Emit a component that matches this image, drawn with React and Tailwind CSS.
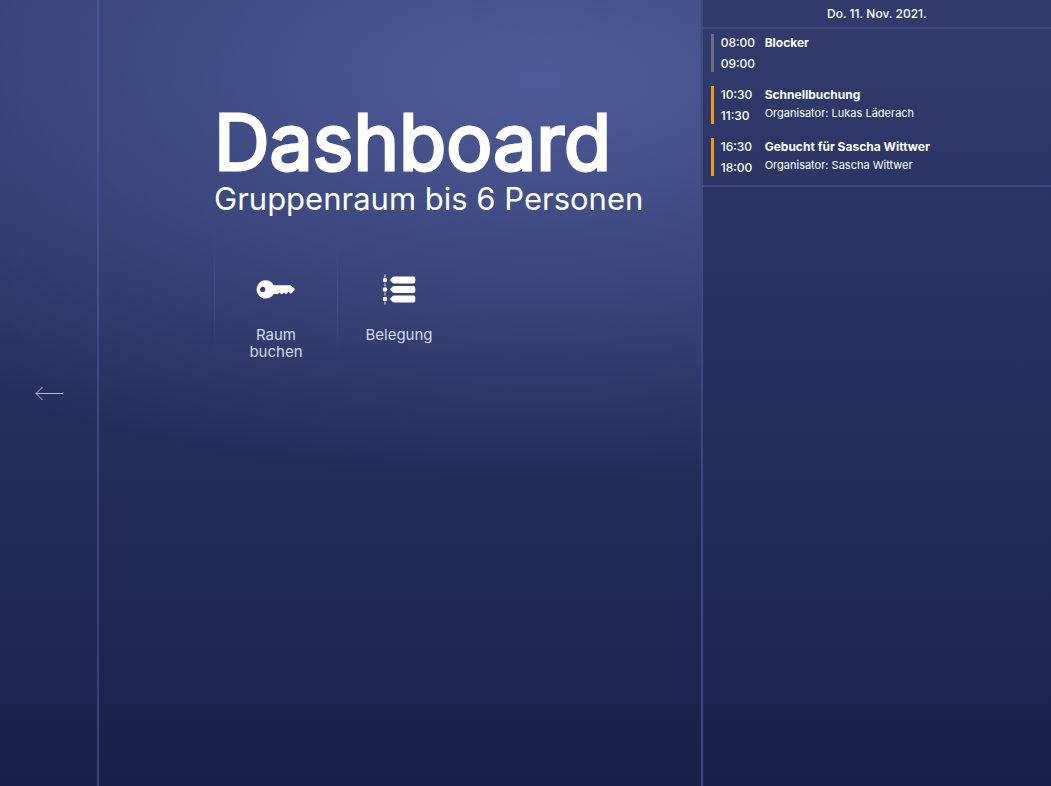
import React from "react";

const bookings = [
  { start: "08:00", end: "09:00", title: "Blocker", organizer: null, bar: "bg-[#6b7080]" },
  { start: "10:30", end: "11:30", title: "Schnellbuchung", organizer: "Lukas Läderach", bar: "bg-[#ee9a12]" },
  { start: "16:30", end: "18:00", title: "Gebucht für Sascha Wittwer", organizer: "Sascha Wittwer", bar: "bg-[#ee9a12]" },
];

function KeyIcon() {
  return (
    <svg width="40" height="36" viewBox="0 0 40 36" fill="currentColor" aria-hidden="true">
      <path
        fillRule="evenodd"
        d="M9.500 9.200a9.200 9.200 0 0 1 8.200 5H34q1 0 1.700.7l2.800 2.800q.7.800 0 1.600l-3 2.900q-.8.700-1.600 0l-1.400-1.500-2 2.100q-.6.500-1.200 0l-1.200-1.300-1.700 1.500q-.7.500-1.300 0L23.600 21.400l-1.700 1.600h-4.200A9.200 9.200 0 1 1 9.500 9.200zM6.700 15.800a2.600 2.600 0 1 0 0 5.200 2.600 2.600 0 0 0 0-5.200z"
      />
    </svg>
  );
}

function AgendaIcon() {
  return (
    <svg width="34" height="36" viewBox="0 0 34 36" fill="currentColor" aria-hidden="true">
      <path d="M3 3.500v30" stroke="currentColor" strokeOpacity="0.75" strokeWidth="1.2" strokeDasharray="3 1.500" />
      {[9, 18.5, 28].map((y) => (
        <g key={y}>
          <circle cx="3" cy={y} r="2.300" />
          <path
            transform={`translate(0 ${y})`}
            d="M8.500 -.8l2-2q.7-.6 1.800-.6h19q2 0 2 2v2.800q0 2-2 2h-19q-1.100 0-1.800-.6l-2-2q-.7-.8 0-1.600z"
          />
        </g>
      ))}
    </svg>
  );
}

function Action({ icon, label }) {
  return (
    <div className="flex w-[123px]">
      <div className="h-32 w-px shrink-0 bg-linear-to-b from-transparent via-[#4b599670] to-transparent" />
      <button type="button" className="flex flex-1 flex-col items-center px-6 pt-[39px] text-[15px] leading-[17px] text-[#d5d9ea]">
        <span className="mb-[19px] text-white">{icon}</span>
        {label}
      </button>
    </div>
  );
}

export default function App() {
  return (
    <div className="flex min-h-screen bg-[radial-gradient(ellipse_900px_400px_at_540px_80px,#4d5b98_0%,#4d5b9800_100%),linear-gradient(to_bottom,#2c3768_0%,#242e5b_56%,#1f2a54_72%,#1a2148_100%)] font-['Inter','Liberation_Sans',sans-serif] text-white">
      <nav className="flex w-[99px] shrink-0 items-center justify-center border-r-2 border-[#5061a880]">
        <button type="button" aria-label="Zurück" className="text-[#b4b9cf]">
          <svg width="28" height="16" viewBox="0 0 28 16" fill="none" stroke="currentColor" aria-hidden="true">
            <path d="M28 8.500H1M7.500 2L1 8.500 7.500 15" />
          </svg>
        </button>
      </nav>

      <main className="min-w-0 flex-1 pt-[102px] pl-[115px]">
        <h1 className="text-[77px] leading-[80px] font-normal [-webkit-text-stroke:3px_white]">Dashboard</h1>
        <p className="text-[31px] leading-[34px]">Gruppenraum bis 6 Personen</p>
        <div className="mt-4 flex">
          <Action icon={<KeyIcon />} label="Raum buchen" />
          <Action icon={<AgendaIcon />} label="Belegung" />
        </div>
      </main>

      <aside className="w-1/3 shrink-0 border-l-2 border-[#3d4980] bg-[linear-gradient(to_bottom,#313c6d_0%,#242e5b_56%,#1f2a54_72%,#1a2148_100%)]">
        <h2 className="border-b-2 border-[#3d4980] text-center text-xs leading-[27px] font-medium">Do. 11. Nov. 2021.</h2>
        <ul className="flex flex-col gap-[10px] border-b-2 border-[#3d4980] px-2 pt-[3px] pb-[7px]">
          {bookings.map((b) => (
            <li key={b.start} className="flex">
              <div className={"my-[2px] w-[3px] shrink-0 " + b.bar} />
              <div className="ml-[7px] flex w-11 shrink-0 flex-col text-xs leading-[21px] font-medium">
                <time>{b.start}</time>
                <time>{b.end}</time>
              </div>
              <div className="min-w-0">
                <h3 className="text-xs leading-[21px] font-bold">{b.title}</h3>
                {b.organizer && <p className="text-[11px] leading-4">Organisator: {b.organizer}</p>}
              </div>
            </li>
          ))}
        </ul>
      </aside>
    </div>
  );
}
